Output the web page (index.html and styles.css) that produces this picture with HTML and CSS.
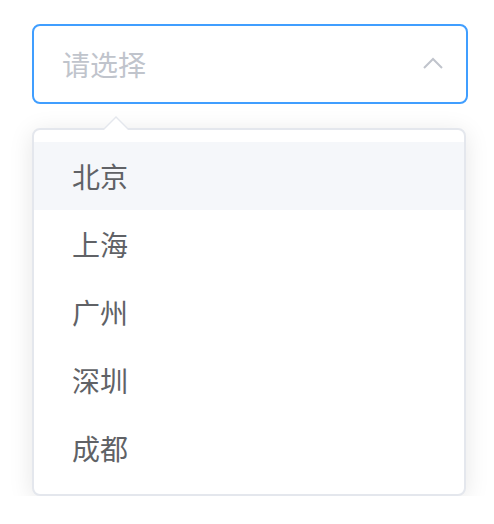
FILE: index.html
```html
<!DOCTYPE html>
<html lang="zh-CN">
<head>
    <meta charset="UTF-8">
    <meta name="viewport" content="width=device-width, initial-scale=1.0">
    <title>选择城市</title>
    <link rel="stylesheet" href="styles.css">
</head>
<body>
    <!-- Select input -->
    <div class="select">
        <input type="text" class="select-input" placeholder="请选择" readonly>
        <svg class="select-arrow" width="20" height="12" viewBox="0 0 20 12">
            <path d="M1 11 L10 2 L19 11" fill="none" stroke="#c0c4cc" stroke-width="2"/>
        </svg>
    </div>

    <!-- Dropdown list -->
    <div class="dropdown">
        <span class="dropdown-arrow"></span>
        <ul class="dropdown-list">
            <li class="dropdown-item hover">北京</li>
            <li class="dropdown-item">上海</li>
            <li class="dropdown-item">广州</li>
            <li class="dropdown-item">深圳</li>
            <li class="dropdown-item">成都</li>
        </ul>
    </div>
</body>
</html>
```

FILE: styles.css
```css
body {
    margin: 0;
    padding: 24px 27px 0 32px;
    background: #ffffff;
    font-family: "Helvetica Neue", "Noto Sans CJK SC", "Noto Sans", sans-serif;
}

.select {
    position: relative;
    width: 436px;
}

.select-input {
    display: block;
    box-sizing: border-box;
    width: 100%;
    height: 80px;
    padding: 0 60px 0 28px;
    font-family: inherit;
    font-size: 28px;
    color: #606266;
    border: 2px solid #409eff;
    border-radius: 8px;
    outline: none;
    background: #fff;
}

.select-input::placeholder {
    color: #c0c4cc;
}

.select-arrow {
    position: absolute;
    right: 25px;
    top: 33px;
}

.dropdown {
    position: relative;
    box-sizing: border-box;
    width: 434px;
    margin-top: 24px;
    background: #fff;
    border: 2px solid #e4e7ed;
    border-radius: 8px;
    box-shadow: 0 4px 24px 0 rgba(0, 0, 0, 0.1);
}

.dropdown-arrow,
.dropdown-arrow::after {
    position: absolute;
    width: 0;
    height: 0;
    border: 12px solid transparent;
    border-top-width: 0;
}

.dropdown-arrow {
    top: -14px;
    left: 70px;
    border-bottom-color: #e4e7ed;
}

.dropdown-arrow::after {
    content: "";
    top: 2px;
    left: -12px;
    border-bottom-color: #fff;
}

.dropdown-list {
    list-style: none;
    margin: 0;
    padding: 12px 0;
}

.dropdown-item {
    height: 68px;
    line-height: 68px;
    padding: 0 38px;
    font-size: 28px;
    color: #606266;
}

.dropdown-item.hover {
    background: #f5f7fa;
}
```
